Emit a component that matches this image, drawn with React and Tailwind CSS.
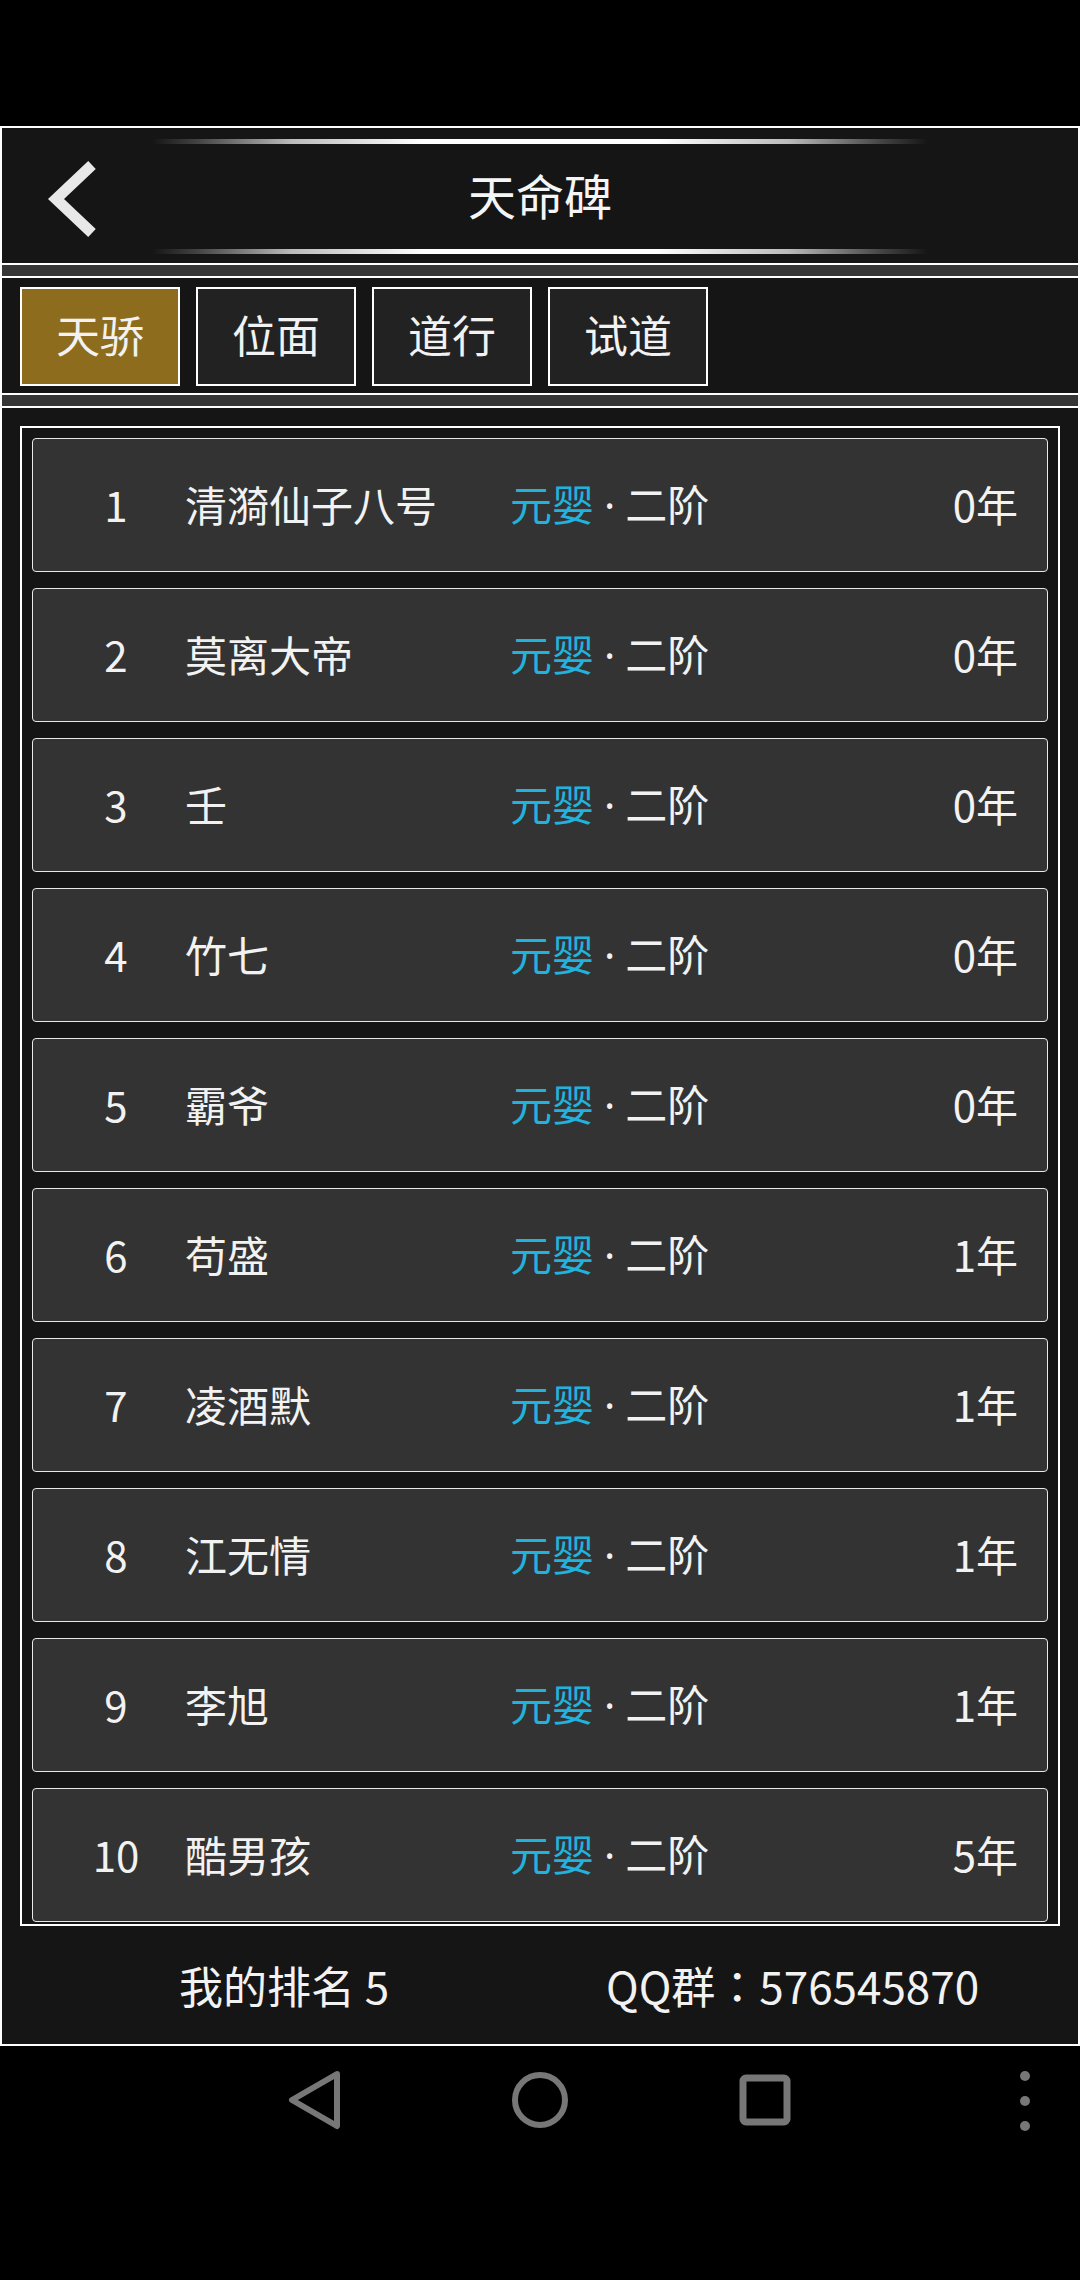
import React from "react";

const rows = [
  { rank: 1, name: "清漪仙子八号", years: "0年" },
  { rank: 2, name: "莫离大帝", years: "0年" },
  { rank: 3, name: "壬", years: "0年" },
  { rank: 4, name: "竹七", years: "0年" },
  { rank: 5, name: "霸爷", years: "0年" },
  { rank: 6, name: "苟盛", years: "1年" },
  { rank: 7, name: "凌酒默", years: "1年" },
  { rank: 8, name: "江无情", years: "1年" },
  { rank: 9, name: "李旭", years: "1年" },
  { rank: 10, name: "酷男孩", years: "5年" },
];

const tabs = ["天骄", "位面", "道行", "试道"];

function Glow() {
  return (
    <div className="mx-auto w-[776px] h-[5px] rounded-full bg-[linear-gradient(to_right,transparent_0%,#444_6%,#bbb_18%,#fff_35%,#fff_65%,#bbb_82%,#444_94%,transparent_100%)]" />
  );
}

function Separator() {
  return <div className="h-[15px] border-y-2 border-white bg-[#363636]" />;
}

export default function App() {
  return (
    <div
      className="w-[1080px] h-[2280px] bg-black flex flex-col text-[#f2f2f2]"
      style={{ fontFamily: '"Noto Sans CJK SC", "Noto Sans", sans-serif' }}
    >
      <div className="h-[126px]" />
      <div className="border-2 border-white bg-[#151515] flex flex-col">
        {/* header */}
        <div className="h-[135px] flex flex-col pt-[11px] pb-[9px]">
          <Glow />
          <div className="flex-1 grid grid-cols-[1fr_auto_1fr] items-center">
            <div className="pl-[45px] pt-[4px]">
              <svg width="52" height="78" viewBox="0 0 52 78">
                <polyline
                  points="45,5 9,39 45,73"
                  fill="none"
                  stroke="#e8e8e8"
                  strokeWidth="11"
                  strokeLinejoin="miter"
                />
              </svg>
            </div>
            <div className="text-[48px] leading-none text-[#f5f5f5] pb-[6px]">天命碑</div>
            <div />
          </div>
          <Glow />
        </div>
        <Separator />
        {/* tabs */}
        <div className="h-[115px] pl-[18px] pt-[9px] flex gap-[16px]">
          {tabs.map((t, i) => (
            <div
              key={t}
              className={
                "w-[160px] h-[99px] border-2 border-white flex items-center justify-center text-[44px] leading-none pb-[5px] " +
                (i === 0 ? "bg-[#8e6c1e]" : "bg-[#222222]")
              }
            >
              {t}
            </div>
          ))}
        </div>
        <Separator />
        {/* list */}
        <div className="px-[18px] pt-[18px]">
          <div className="border-2 border-white px-[10px] pt-[10px] pb-[2px] flex flex-col gap-[16px]">
            {rows.map((r) => (
              <div
                key={r.rank}
                className="h-[134px] border border-[#e8e8e8] rounded-[4px] bg-[#333333] flex items-center pl-[14px] pr-[29px] text-[42px] leading-none pb-[2px]"
              >
                <div className="w-[138px] text-center">{r.rank}</div>
                <div className="w-[325px]">{r.name}</div>
                <div className="flex items-baseline">
                  <span className="text-[#22b2dc]">元婴</span>
                  <span
                    className="px-[10px]"
                    style={{ fontFamily: '"Noto Sans", "DejaVu Sans", sans-serif' }}
                  >
                    ·
                  </span>
                  <span>二阶</span>
                </div>
                <div className="ml-auto">{r.years}</div>
              </div>
            ))}
          </div>
        </div>
        {/* footer */}
        <div className="h-[118px] flex items-center text-[44px] leading-none">
          <div className="pl-[177px] w-[604px]">我的排名 5</div>
          <div>
            QQ群
            <span style={{ fontFamily: '"Noto Sans CJK TC", "Noto Sans CJK SC", sans-serif' }}>：</span>
            576545870
          </div>
        </div>
      </div>
      {/* nav bar */}
      <div className="flex-1 relative">
        <div className="h-[110px] flex items-center">
          <svg className="absolute left-[287px] top-[24px]" width="56" height="60" viewBox="0 0 56 60">
            <path d="M50 4 L5 30 L50 56 Z" fill="none" stroke="#777" strokeWidth="6" strokeLinejoin="round" />
          </svg>
          <svg className="absolute left-[511px] top-[25px]" width="58" height="58" viewBox="0 0 58 58">
            <circle cx="29" cy="29" r="25" fill="none" stroke="#777" strokeWidth="6" />
          </svg>
          <svg className="absolute left-[739px] top-[28px]" width="52" height="52" viewBox="0 0 52 52">
            <rect x="4" y="4" width="44" height="44" rx="3" fill="none" stroke="#777" strokeWidth="7" />
          </svg>
          <svg className="absolute left-[1018px] top-[24px]" width="14" height="62" viewBox="0 0 14 62">
            <circle cx="7" cy="6" r="5" fill="#777" />
            <circle cx="7" cy="31" r="5" fill="#777" />
            <circle cx="7" cy="56" r="5" fill="#777" />
          </svg>
        </div>
      </div>
    </div>
  );
}
